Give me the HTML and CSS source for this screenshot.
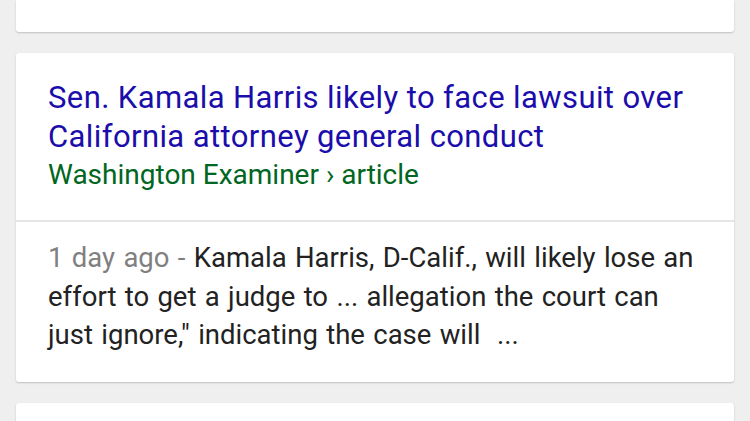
FILE: index.html
```html
<!DOCTYPE html>
<html>
<head>
  <title>Search results</title>
  <meta name="viewport" content="width=device-width, initial-scale=1.0">
  <link rel="stylesheet" href="styles.css">
</head>
<body>

  <div class="results">

    <!-- previous result, scrolled off -->
    <div class="card card-stub"></div>

    <!-- news result -->
    <div class="card">
      <div class="card-head">
        <a class="title" href="#">Sen. Kamala Harris likely to face lawsuit over California attorney general conduct</a>
        <div class="source">Washington Examiner › article</div>
      </div>
      <div class="card-body">
        <span class="date">1 day ago - </span>Kamala Harris, D-Calif., will likely lose an effort to get a judge to ... allegation the court can just ignore," indicating the case will &nbsp;...
      </div>
    </div>

    <!-- next result -->
    <div class="card card-next"></div>

  </div>

</body>
</html>
```

FILE: styles.css
```css
body {
  margin: 0;
  background: #efefef;
  font-family: Roboto, "Noto Sans", Arial, sans-serif;
}

.results {
  display: flex;
  flex-direction: column;
  gap: 21px;
  padding: 0 16px;
}

.card {
  background: #fff;
  border-radius: 3px;
  box-shadow: 0 1px 2px rgba(0, 0, 0, 0.2);
}

.card-stub {
  height: 32px;
  border-radius: 0 0 3px 3px;
}

.card-next {
  height: 40px;
}

.card-head {
  padding: 25px 32px 26px;
  border-bottom: 2px solid #e6e6e6;
}

.title {
  display: block;
  color: #1a0dab;
  text-decoration: none;
  font-size: 31px;
  letter-spacing: 0.4px;
  line-height: 39px;
}

.source {
  color: #006621;
  font-size: 28px;
  line-height: 38px;
}

.card-body {
  padding: 17px 32px 27px;
  color: #222;
  font-size: 27.5px;
  word-spacing: 1.5px;
  line-height: 38.5px;
}

.date {
  color: #808080;
}
```
